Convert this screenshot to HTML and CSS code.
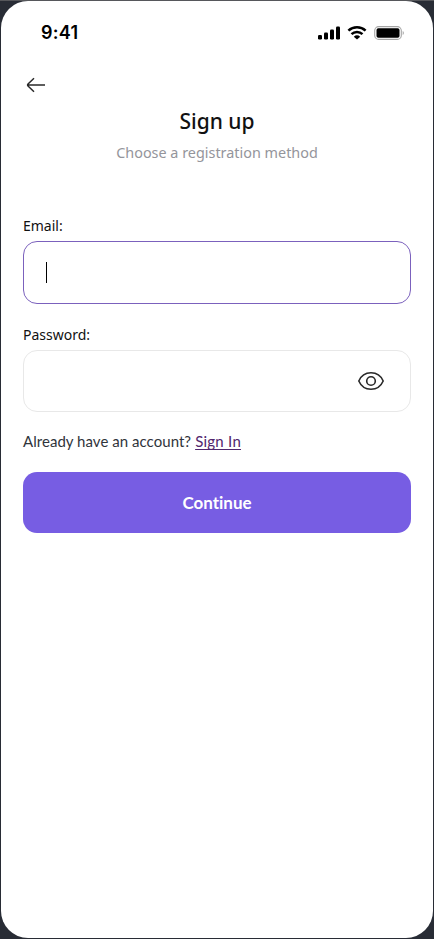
FILE: index.html
```html
<!DOCTYPE html>
<html lang="en">
<head>
<meta charset="utf-8">
<title>Sign up</title>
<link rel="stylesheet" href="styles.css">
</head>
<body>
<main class="phone">
  <div class="status">
    <span class="time">9:41</span>
    <div class="indicators">
      <svg width="22" height="14" viewBox="0 0 22 14"><rect x="0" y="9" width="4" height="4.5" rx="1.2"/><rect x="6" y="6.5" width="4" height="7" rx="1.2"/><rect x="12" y="3.5" width="4" height="10" rx="1.2"/><rect x="18" y="0.5" width="4" height="13" rx="1.2"/></svg>
      <svg class="wifi" width="20" height="14" viewBox="0 0 20 14"><path d="M1.4 4.7a12.5 12.5 0 0 1 17.2 0M4.5 8.2a8 8 0 0 1 11 0" fill="none" stroke="#000" stroke-width="2.5"/><path d="M10 13.5 6.8 10.7a4.7 4.7 0 0 1 6.4 0z"/></svg>
      <svg class="battery" width="31" height="14" viewBox="0 0 31 14"><rect x=".7" y=".6" width="26.6" height="12.8" rx="4" fill="none" stroke="#a5a5a5" stroke-width="1.1"/><rect x="2.5" y="2.3" width="23" height="9.4" rx="1.8"/><path d="M28.7 5a2.3 2.3 0 0 1 0 4z" fill="#a5a5a5"/></svg>
    </div>
  </div>
  <a class="back" href="#" aria-label="Back"><svg width="20" height="16" viewBox="0 0 20 16"><path d="M19 8H2M8 1.2 2 7a1.4 1.4 0 0 0 0 2l6 5.8" fill="none" stroke="#292929" stroke-width="1.5"/></svg></a>
  <h1><span>Sign up</span></h1>
  <p class="subtitle"><span>Choose a registration method</span></p>
  <form>
    <label class="email-label"><span>Email:</span></label>
    <div class="field active"><span class="caret"></span></div>
    <label class="password-label"><span>Password:</span></label>
    <div class="field password"><svg width="28" height="20" viewBox="0 0 28 20" fill="none" stroke="#292929" stroke-width="1.6"><path d="M1.8 10C4.2 4.5 9 1.8 14 1.8S23.8 4.5 26.2 10C23.8 15.5 19 18.2 14 18.2S4.2 15.5 1.8 10z"/><circle cx="14" cy="10" r="4.3"/></svg></div>
    <p class="account"><span class="question">Already have an account?</span><a href="#">Sign In</a></p>
    <button type="button"><span>Continue</span></button>
  </form>
</main>
</body>
</html>
```
FILE: styles.css
```css
* { box-sizing: border-box; }
body { margin: 0; height: 939px; padding: 1px; background: #282c35; box-shadow: inset 0 1px #56575b; overflow: hidden; font-family: "Noto Sans", "Open Sans", sans-serif; }
.phone { height: 937px; border-radius: 27px; background: #fff; padding: 0 22px; }
.status { height: 63px; padding: 0 6px 0 18px; display: flex; align-items: center; justify-content: space-between; }
.time { font: 600 18px/24px Inter, sans-serif; letter-spacing: .3px; }
.indicators { display: flex; align-items: center; }
.indicators svg { display: block; }
.wifi { margin-left: 7px; }
.battery { margin-left: 7px; }
.back { display: block; width: 20px; height: 16px; margin: 13px 0 0 3px; }
.back svg { display: block; }
h1 { margin: 13px 0 0; height: 31px; text-align: center; font-size: 21px; line-height: 31px; font-weight: 500; color: #111; }
.subtitle { margin: 6px 0 0; height: 20px; text-align: center; font-size: 14.4px; line-height: 20px; color: #94959b; }
form { padding-top: 53px; }
label { display: block; height: 20px; font-size: 14px; line-height: 20px; color: #111; }
.field { display: flex; align-items: center; border: 1px solid #e8e8e8; border-radius: 14px; height: 62px; }
.active { height: 63px; margin-top: 5px; border-color: #7b61bd; padding-left: 22px; }
.caret { width: 1px; height: 21px; background: #000; }
.password-label { margin-top: 21px; }
.password { margin-top: 5px; justify-content: flex-end; padding-right: 25px; }
.account { display: flex; margin: 18px 0 0; height: 22px; font: 15px/22px Lato, sans-serif; color: #30343b; }
.question { letter-spacing: .04px; }
.account a { margin-left: 4px; letter-spacing: .25px; color: #51266d; text-underline-offset: 2px; text-decoration-skip-ink: none; }
button { display: block; width: 100%; height: 61px; margin-top: 20px; padding: 0; border: 0; border-radius: 14px; background: #775de3; color: #fff; font: 700 17px/24px Lato, sans-serif; font-variant-ligatures: none; }
```
